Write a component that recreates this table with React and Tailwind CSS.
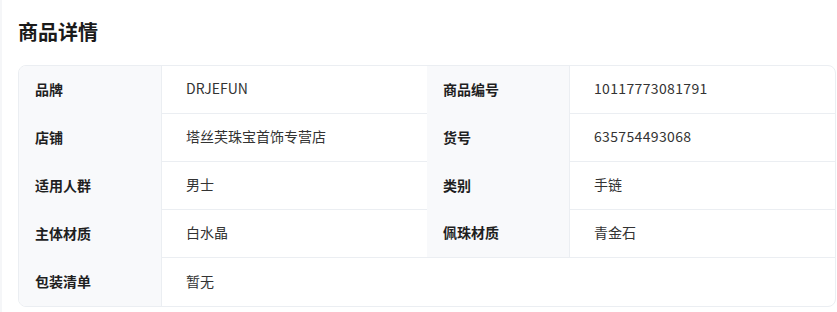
export default function App() {
  const font = { fontFamily: '"Noto Sans CJK SC", "Noto Sans", sans-serif' };
  const L = "flex items-center pl-[16px] pb-[2px] bg-[#f8f9fb] border-r border-[#ebeef2] text-[14px] font-bold text-[#1f1f1f] h-[48px]";
  const V = "flex items-center pl-[24px] pb-[2px] border-b border-[#ebeef2] text-[14px] text-[#333333] h-[48px]";
  const rows = [
    ["品牌", "DRJEFUN", "商品编号", "10117773081791"],
    ["店铺", "塔丝芙珠宝首饰专营店", "货号", "635754493068"],
    ["适用人群", "男士", "类别", "手链"],
    ["主体材质", "白水晶", "佩珠材质", "青金石"],
  ];
  return (
    <div className="flex w-[837px] h-[312px] bg-white" style={font}>
      <div className="w-[2px] bg-[#f5f6f8]" />
      <div className="flex-1 pl-[16px] pr-[1px]">
        <div className="pt-[18px] h-[47px] mb-[18px] text-[20px] leading-[28px] font-bold text-[#1a1a1a]">商品详情</div>
        <div className="w-[818px] border border-[#ebeef2] rounded-[8px] overflow-hidden grid grid-cols-[143px_265px_143px_265px]">
          {rows.map((r, i) => (
            <div key={i} className="contents">
              <div className={L}>{r[0]}</div>
              <div className={V}>{r[1]}</div>
              <div className={L + (i === 3 ? " border-b" : "")}>{r[2]}</div>
              <div className={V + (/^\d+$/.test(r[3]) ? " tracking-[0.35px]" : "")}>{r[3]}</div>
            </div>
          ))}
          <div className={L}>包装清单</div>
          <div className="col-span-3 flex items-center pl-[24px] pb-[2px] text-[14px] text-[#333333] h-[48px]">暂无</div>
        </div>
      </div>
    </div>
  );
}
